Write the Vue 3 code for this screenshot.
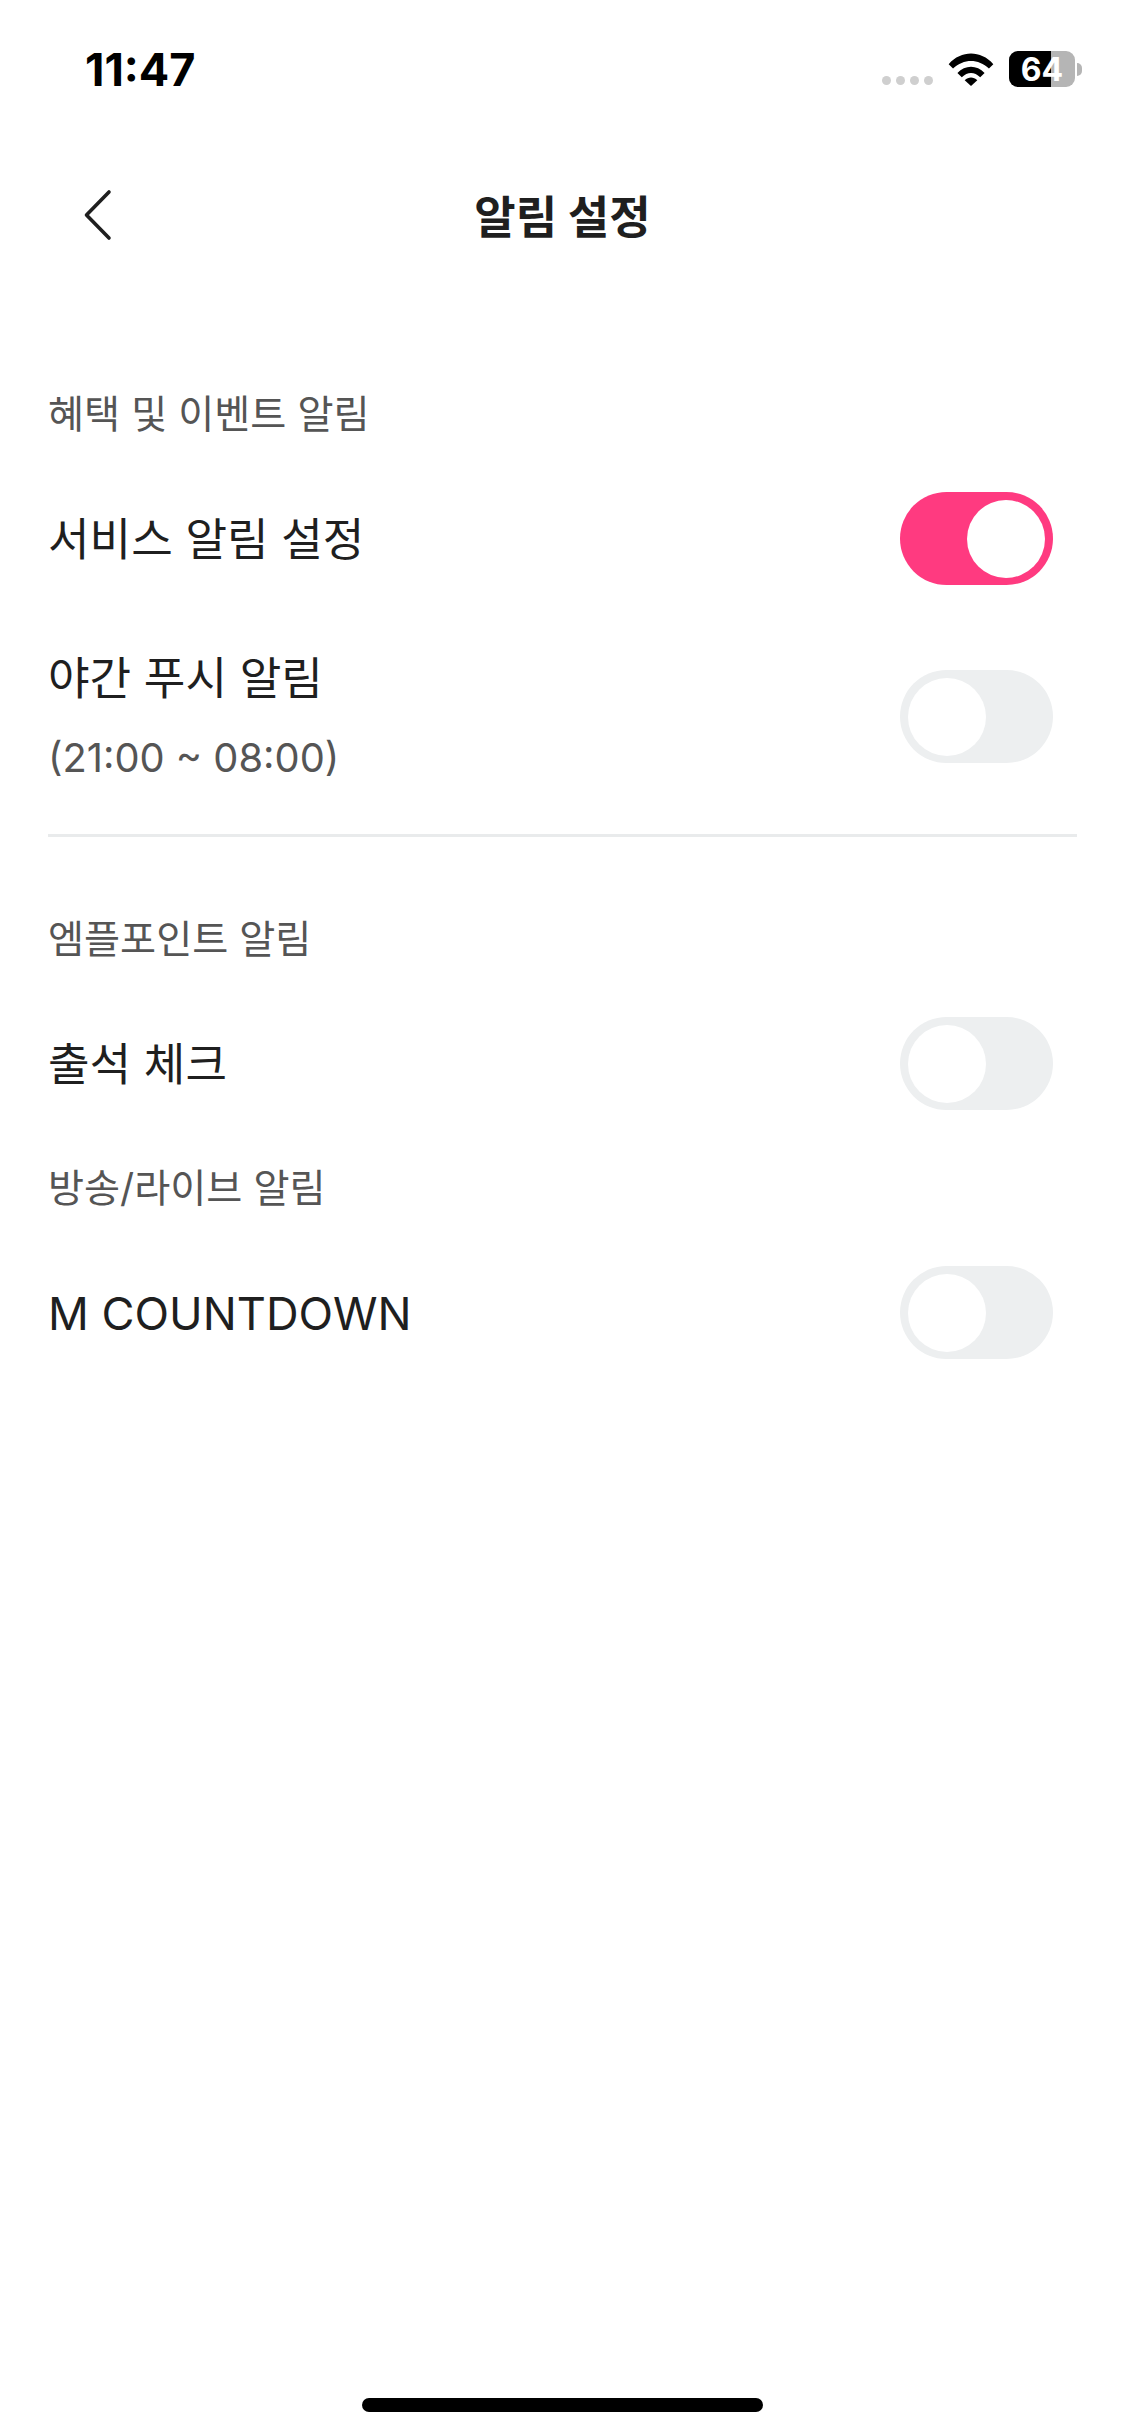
<template>
  <div class="screen">
    <div class="status-bar">
      <span class="time">11:47</span>
      <div class="status-icons">
        <div class="signal">
          <i v-for="n in 4" :key="n"></i>
        </div>
        <svg class="wifi" width="46" height="33" viewBox="0 0 46 34">
          <path d="M0 11.5 C13 -3 33 -3 46 11.5 L41.5 16 C30.5 5.5 15.5 5.5 4.5 16 Z" fill="#000" />
          <path d="M9 20.5 C17 12 29 12 37 20.5 L32.5 25 C26.5 19 19.5 19 13.5 25 Z" fill="#000" />
          <path d="M16.5 28 C20.5 24.3 25.5 24.3 29.5 28 L23 34 Z" fill="#000" />
        </svg>
        <div class="battery">
          <div class="battery-body">
            <div class="battery-fill"></div>
            <span class="battery-num">64</span>
          </div>
          <div class="battery-cap"></div>
        </div>
      </div>
    </div>

    <div class="nav-bar">
      <svg class="back" width="30" height="54" viewBox="0 0 30 54">
        <path d="M26 4 L3.5 27 L26 50" fill="none" stroke="#1f1f1f" stroke-width="3.6" stroke-linecap="round" stroke-linejoin="round" />
      </svg>
      <h1 class="nav-title">알림 설정</h1>
    </div>

    <div class="content">
      <section class="section">
        <h2 class="section-title">혜택 및 이벤트 알림</h2>
        <div class="row">
          <span class="row-label">서비스 알림 설정</span>
          <div class="toggle on"><div class="knob"></div></div>
        </div>
        <div class="row row-night">
          <div class="row-text">
            <span class="row-label">야간 푸시 알림</span>
            <span class="row-sub">(21:00 ~ 08:00)</span>
          </div>
          <div class="toggle"><div class="knob"></div></div>
        </div>
      </section>

      <div class="divider"></div>

      <section class="section section-point">
        <h2 class="section-title">엠플포인트 알림</h2>
        <div class="row">
          <span class="row-label">출석 체크</span>
          <div class="toggle"><div class="knob"></div></div>
        </div>
      </section>

      <section class="section section-live">
        <h2 class="section-title">방송/라이브 알림</h2>
        <div class="row">
          <span class="row-label">M COUNTDOWN</span>
          <div class="toggle"><div class="knob"></div></div>
        </div>
      </section>
    </div>

    <div class="home-indicator"></div>
  </div>
</template>

<script setup>
</script>

<style>
html, body {
  margin: 0;
  background: #fff;
}
</style>

<style scoped>
.screen {
  position: relative;
  width: 1125px;
  height: 2436px;
  background: #fff;
  overflow: hidden;
  font-family: Inter, "Noto Sans CJK KR", sans-serif;
  color: #1f1f1f;
}

.status-bar {
  display: flex;
  justify-content: space-between;
  align-items: center;
  height: 138px;
  padding: 0 43px 0 85px;
  box-sizing: border-box;
}

.time {
  font-size: 45px;
  font-weight: 700;
  color: #000;
}

.status-icons {
  display: flex;
  align-items: center;
}

.signal {
  display: flex;
  gap: 5px;
  margin-top: 23px;
  margin-right: 15px;
}

.signal i {
  width: 9px;
  height: 9px;
  border-radius: 50%;
  background: #cfcfcf;
}

.wifi {
  margin-right: 15px;
}

.battery {
  display: flex;
  align-items: center;
}

.battery-body {
  position: relative;
  width: 66px;
  height: 36px;
  border-radius: 9px;
  background: #b5b5b5;
  overflow: hidden;
  display: flex;
  align-items: center;
  justify-content: center;
}

.battery-fill {
  position: absolute;
  left: 0;
  top: 0;
  bottom: 0;
  width: 42px;
  background: #000;
}

.battery-num {
  position: relative;
  font-size: 32px;
  font-weight: 700;
  color: #fff;
}

.battery-cap {
  width: 5px;
  height: 13px;
  margin-left: 2px;
  border-radius: 0 7px 7px 0;
  background: #b5b5b5;
}

.nav-bar {
  position: relative;
  display: flex;
  align-items: center;
  justify-content: center;
  height: 153px;
}

.back {
  position: absolute;
  left: 83px;
  top: 50px;
}

.nav-title {
  margin: 0;
  font-size: 45px;
  font-weight: 700;
  color: #1f1f1f;
}

.content {
  display: flex;
  flex-direction: column;
  padding: 0 48px;
  margin-top: 93px;
}

.section-title {
  margin: 0;
  font-size: 39.2px;
  line-height: 60px;
  font-weight: 400;
  color: #555;
}

.row {
  display: flex;
  justify-content: space-between;
  align-items: center;
  height: 93px;
  padding-right: 24px;
  margin-top: 48px;
}

.row-night {
  height: 172px;
  align-items: flex-start;
  margin-top: 47px;
}

.row-night .toggle {
  margin-top: 38px;
}

.row-text {
  display: flex;
  flex-direction: column;
  padding-top: 7px;
}

.row-label {
  padding-top: 2px;
  font-size: 45.2px;
  line-height: 76px;
  color: #1f1f1f;
}

.row-sub {
  margin-top: 11px;
  font-size: 39.8px;
  line-height: 60px;
  color: #555;
}

.toggle {
  box-sizing: border-box;
  width: 153px;
  height: 93px;
  padding: 8px;
  border-radius: 47px;
  background: #edeff0;
  display: flex;
  justify-content: flex-start;
}

.toggle.on {
  background: #ff3a80;
  justify-content: flex-end;
}

.knob {
  width: 78px;
  height: 78px;
  border-radius: 50%;
  background: #fff;
}

.divider {
  height: 3px;
  background: #e9ebec;
  margin-top: 30px;
}

.section-point {
  margin-top: 72px;
}

.section-live {
  margin-top: 48px;
}

.home-indicator {
  position: absolute;
  left: 362px;
  top: 2398px;
  width: 401px;
  height: 14px;
  border-radius: 7px;
  background: #000;
}
</style>
